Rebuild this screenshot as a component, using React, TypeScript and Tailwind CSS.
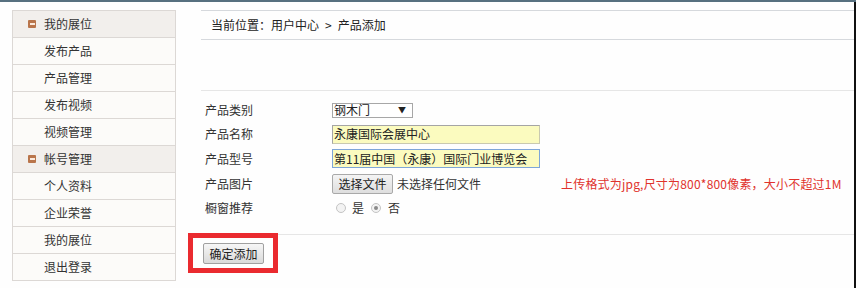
import React from 'react';

const menu = [
  { title: '我的展位', items: ['发布产品', '产品管理', '发布视频', '视频管理'] },
  { title: '帐号管理', items: ['个人资料', '企业荣誉', '我的展位', '退出登录'] },
];

const MinusIcon: React.FC = () => (
  <span className="w-[8px] h-[8px] bg-[#b9754b] flex items-center justify-center mr-[8px] rounded-[1px]">
    <span className="w-[5px] h-[2px] bg-[#fbe9dc]" />
  </span>
);

const Sidebar: React.FC = () => (
  <aside className="ml-[12px] mt-[8px] w-[164px] self-start border border-[#dcd8d5] border-b-0">
    {menu.map((group) => (
      <div key={group.title}>
        <div className="h-[27px] flex items-center pl-[15px] bg-[#f2efec] border-b border-[#dcd8d5]">
          <MinusIcon />
          <span>{group.title}</span>
        </div>
        {group.items.map((item) => (
          <div
            key={item}
            className="h-[27px] flex items-center pl-[31px] bg-[#fcfbf9] border-b border-[#dcd8d5]"
          >
            {item}
          </div>
        ))}
      </div>
    ))}
  </aside>
);

const Row: React.FC<{ label: string; h: string; children: React.ReactNode }> = ({ label, h, children }) => (
  <div className={`flex items-center ${h}`}>
    <div className="w-[131px] pl-[4px]">{label}</div>
    <div className="flex items-center">{children}</div>
  </div>
);

const Radio: React.FC<{ checked?: boolean }> = ({ checked }) => (
  <span className="w-[10px] h-[10px] rounded-full border border-[#c4c4c4] bg-[#f3f3f3] flex items-center justify-center">
    {checked && <span className="w-[4px] h-[4px] rounded-full bg-[#8a8a8a]" />}
  </span>
);

export default function App() {
  return (
    <div className="relative w-[856px] h-[288px] bg-[#fefefe] overflow-hidden flex flex-col text-[12px] leading-none text-[#333] font-['Noto_Sans_CJK_SC','Noto_Sans',sans-serif]">
      <div className="h-[2px] bg-[#57707f]" />
      <div className="flex flex-1">
        <Sidebar />

        <main className="ml-[25px] mt-[8px] flex-1 flex flex-col">
          <div className="h-[30px] border-t border-b border-[#d6d9dd] flex items-center pl-[10px] text-[#222]">
            <span>当前位置：用户中心</span>
            <span className="mx-[6px]">&gt;</span>
            <span>产品添加</span>
          </div>

          <div className="mt-[50px] border-t border-b border-[#e6e6e6] pt-[7px] pb-[14px]">
            <Row label="产品类别" h="h-[24px]">
              <div className="w-[81px] h-[15px] border border-[#a7a7a7] bg-white flex items-center justify-between pl-[1px] pr-[6px] text-[#222]">
                <span>钢木门</span>
                <span className="text-[8px]">▼</span>
              </div>
            </Row>
            <Row label="产品名称" h="h-[24px]">
              <div className="w-[208px] h-[19px] bg-[#fbfbbf] border border-[#c9c9b0] border-t-[#a5a5a5] border-l-[#a5a5a5] flex items-center pl-[1px] text-[#222]">
                永康国际会展中心
              </div>
            </Row>
            <Row label="产品型号" h="h-[25px]">
              <div className="w-[208px] h-[19px] bg-[#fbfbbf] border border-[#7ea6d8] flex items-center pl-[1px] text-[#222]">
                第11届中国（永康）国际门业博览会
              </div>
            </Row>
            <Row label="产品图片" h="h-[25px]">
              <div className="flex items-center">
                <span className="h-[20px] w-[61px] flex items-center justify-center border border-[#a9a9a9] rounded-[2px] bg-gradient-to-b from-[#f4f4f4] to-[#dedede] text-[#222]">
                  选择文件
                </span>
                <span className="ml-[4px] w-[164px]">未选择任何文件</span>
                <span className="text-[#e0322c] tracking-[0.2px]">上传格式为jpg,尺寸为800*800像素，大小不超过1M</span>
              </div>
            </Row>
            <Row label="橱窗推荐" h="h-[24px]">
              <div className="flex items-center pl-[4px]">
                <Radio />
                <span className="ml-[6px] mr-[7px]">是</span>
                <Radio checked />
                <span className="ml-[7px]">否</span>
              </div>
            </Row>
          </div>

          <div className="pt-[8px] pl-[2px]">
            <button className="h-[21px] w-[61px] border border-[#a0a0a0] rounded-[2px] bg-gradient-to-b from-[#f6f6f6] to-[#dadada] text-[12px] text-[#222] flex items-center justify-center">
              确定添加
            </button>
          </div>
        </main>

        <div className="w-[2px] bg-[#111]" />
      </div>

      <div className="absolute left-[188px] top-[233px] w-[90px] h-[40px] border-[5px] border-[#ea2a2f]" />
    </div>
  );
}
